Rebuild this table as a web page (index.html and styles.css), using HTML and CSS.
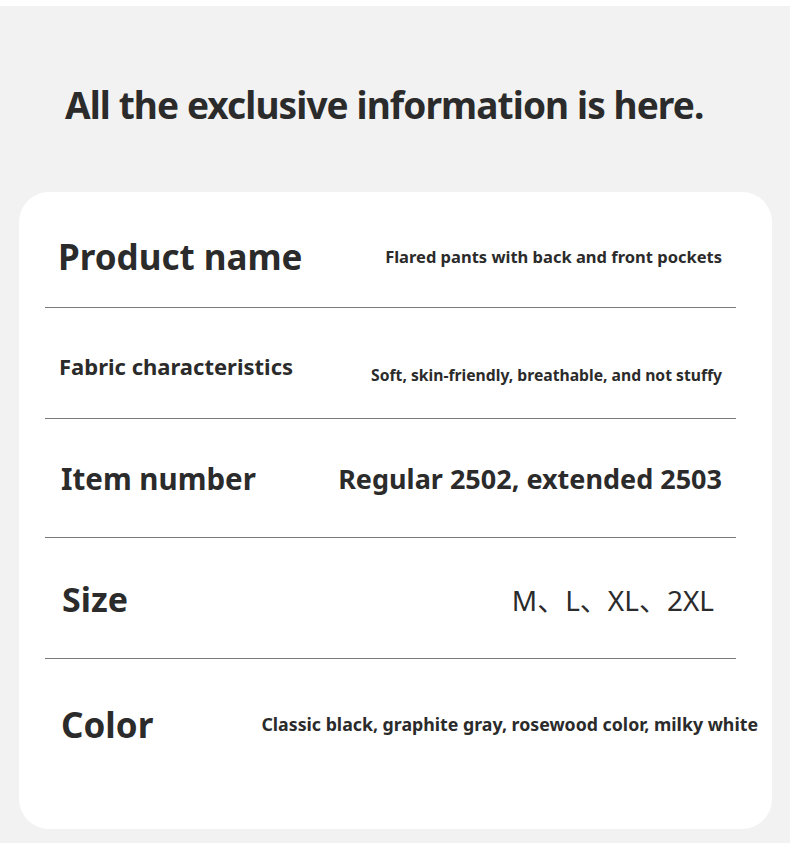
FILE: index.html
```html
<!DOCTYPE html>
<html>
<head>
<meta charset="utf-8">
<link rel="stylesheet" href="styles.css">
</head>
<body>
<div class="page">
  <h1 class="title"><span>All the exclusive information is here.</span></h1>
  <div class="card">
    <div class="row r1">
      <div class="label"><span>Product name</span></div>
      <div class="value"><span>Flared pants with back and front pockets</span></div>
    </div>
    <div class="row r2">
      <div class="label"><span>Fabric characteristics</span></div>
      <div class="value"><span>Soft, skin-friendly, breathable, and not stuffy</span></div>
    </div>
    <div class="row r3">
      <div class="label"><span>Item number</span></div>
      <div class="value"><span>Regular 2502, extended 2503</span></div>
    </div>
    <div class="row r4">
      <div class="label"><span>Size</span></div>
      <div class="value"><span>M、L、XL、2XL</span></div>
    </div>
    <div class="row r5">
      <div class="label"><span>Color</span></div>
      <div class="value"><span>Classic black, graphite gray, rosewood color, milky white</span></div>
    </div>
  </div>
</div>
</body>
</html>
```
FILE: styles.css
```css
html, body {
  margin: 0;
  padding: 0;
  background: #ffffff;
}
.page {
  margin-top: 6px;
  height: 837px;
  background: #f2f2f2;
  font-family: "Noto Sans", "Noto Sans CJK SC", sans-serif;
  color: #2b2b2b;
  overflow: hidden;
  display: flex;
  flex-direction: column;
}
.title {
  margin: 0;
  height: 186px;
  box-sizing: border-box;
  padding: 79px 0 0 65px;
  font-size: 37px;
  font-weight: 700;
  line-height: 40px;
  letter-spacing: -0.9px;
}
.card {
  margin: 0 18px 0 19px;
  height: 637px;
  background: #ffffff;
  border-radius: 30px;
  padding: 0 36px 0 26px;
  display: flex;
  flex-direction: column;
}
.row {
  display: flex;
  justify-content: space-between;
  align-items: center;
  border-bottom: 1px solid #7a7a7a;
  box-sizing: border-box;
  padding: 0 14px 0 14px;
}
.row.r5 { border-bottom: none; }
.r1 { height: 116px; padding-top: 14px; padding-left: 13px; }
.r2 { height: 111px; padding-top: 18px; }
.r3 { height: 119px; padding-left: 16px; }
.r4 { height: 121px; padding-top: 2px; padding-left: 17px; padding-right: 22px; }
.r5 { height: 170px; padding-bottom: 40px; padding-left: 16px; }
.label { font-weight: 700; white-space: nowrap; }
.value { font-weight: 700; white-space: nowrap; }
.r1 .label { font-size: 35px; }
.r1 .value { font-size: 16.5px; }
.r2 .label { font-size: 22px; padding-bottom: 12px; }
.r2 .value { font-size: 15.7px; padding-top: 6px; }
.r3 .label { font-size: 29.5px; }
.r3 .value { font-size: 27px; }
.r4 .label { font-size: 34px; }
.r4 .value { font-size: 28px; font-weight: 400; }
.r5 .label { font-size: 35px; }
.r5 .value { font-size: 17.75px; margin-right: -36px; }
```
